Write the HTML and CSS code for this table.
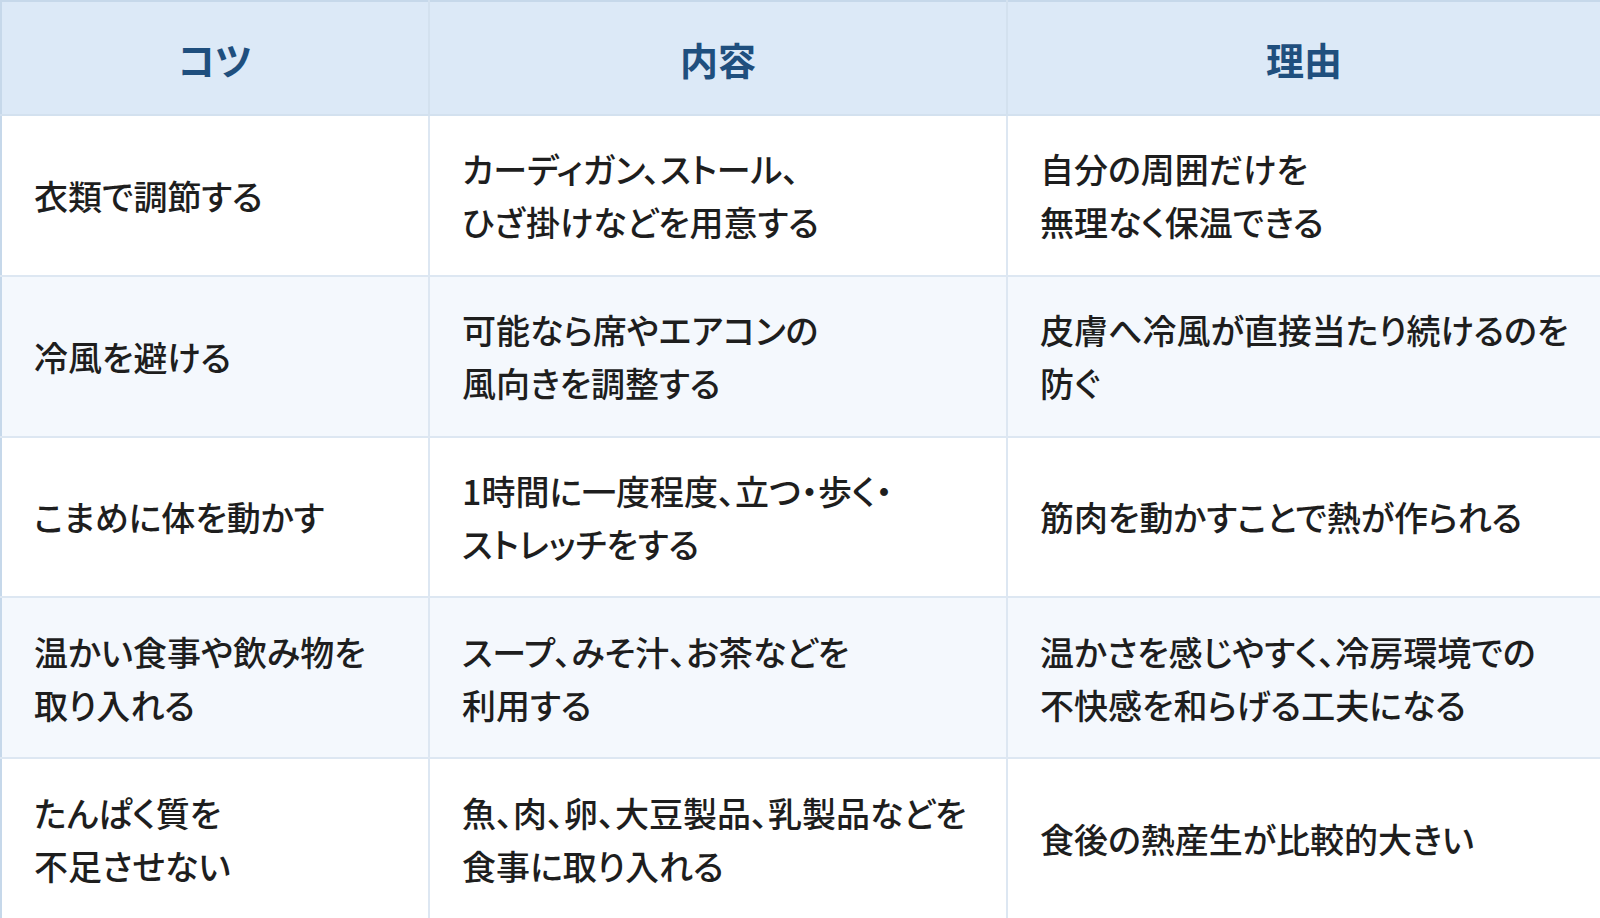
FILE: index.html
```html
<!DOCTYPE html>
<html lang="ja">
<head>
<meta charset="utf-8">
<link rel="stylesheet" href="styles.css">
</head>
<body>
<table class="tips">
  <colgroup>
    <col class="col-a">
    <col class="col-b">
    <col class="col-c">
  </colgroup>
  <thead>
    <tr class="head-row">
      <th>コツ</th>
      <th>内容</th>
      <th>理由</th>
    </tr>
  </thead>
  <tbody>
    <tr>
      <td>衣類で調節する</td>
      <td>カーディガン、ストール、<br>ひざ掛けなどを用意する</td>
      <td>自分の周囲だけを<br>無理なく保温できる</td>
    </tr>
    <tr class="alt">
      <td>冷風を避ける</td>
      <td>可能なら席やエアコンの<br>風向きを調整する</td>
      <td>皮膚へ冷風が直接当たり続けるのを<br>防ぐ</td>
    </tr>
    <tr>
      <td>こまめに体を動かす</td>
      <td>1時間に一度程度、立つ・歩く・<br>ストレッチをする</td>
      <td>筋肉を動かすことで熱が作られる</td>
    </tr>
    <tr class="alt">
      <td>温かい食事や飲み物を<br>取り入れる</td>
      <td>スープ、みそ汁、お茶などを<br>利用する</td>
      <td>温かさを感じやすく、冷房環境での<br>不快感を和らげる工夫になる</td>
    </tr>
    <tr>
      <td>たんぱく質を<br>不足させない</td>
      <td>魚、肉、卵、大豆製品、乳製品などを<br>食事に取り入れる</td>
      <td>食後の熱産生が比較的大きい</td>
    </tr>
  </tbody>
</table>
</body>
</html>
```

FILE: styles.css
```css
html, body {
  margin: 0;
  padding: 0;
  background: #ffffff;
}

body {
  width: 1600px;
  height: 918px;
  overflow: hidden;
  font-family: "Noto Sans CJK JP", "Noto Sans", sans-serif;
  font-feature-settings: "palt";
  color: #1e1e1e;
}

.tips {
  width: 1600px;
  height: 918px;
  border-collapse: collapse;
  table-layout: fixed;
  border: 2px solid #c6d8ea;
}

.col-a { width: 428px; }
.col-b { width: 578px; }
.col-c { width: 594px; }

.tips th,
.tips td {
  border: 2px solid #dde7f2;
  padding: 0 32px;
  font-size: 34px;
  font-weight: 500;
  line-height: 53px;
  vertical-align: middle;
  text-align: left;
  white-space: nowrap;
}

.tips th {
  background: #dce9f7;
  color: #1f4f7e;
  font-weight: 700;
  font-size: 38px;
  text-align: center;
  border-color: #d3e1ef;
  border-top-color: #c6d8ea;
}

.tips th:first-child,
.tips td:first-child {
  border-left-color: #c6d8ea;
}

.tips th:last-child,
.tips td:last-child {
  border-right-color: #c6d8ea;
}

.tips tbody tr:last-child td {
  border-bottom-color: #c6d8ea;
}

.head-row {
  height: 114px;
}

.tips tbody tr {
  height: 160.8px;
}

.tips tr.alt td {
  background: #f4f8fd;
}
```
